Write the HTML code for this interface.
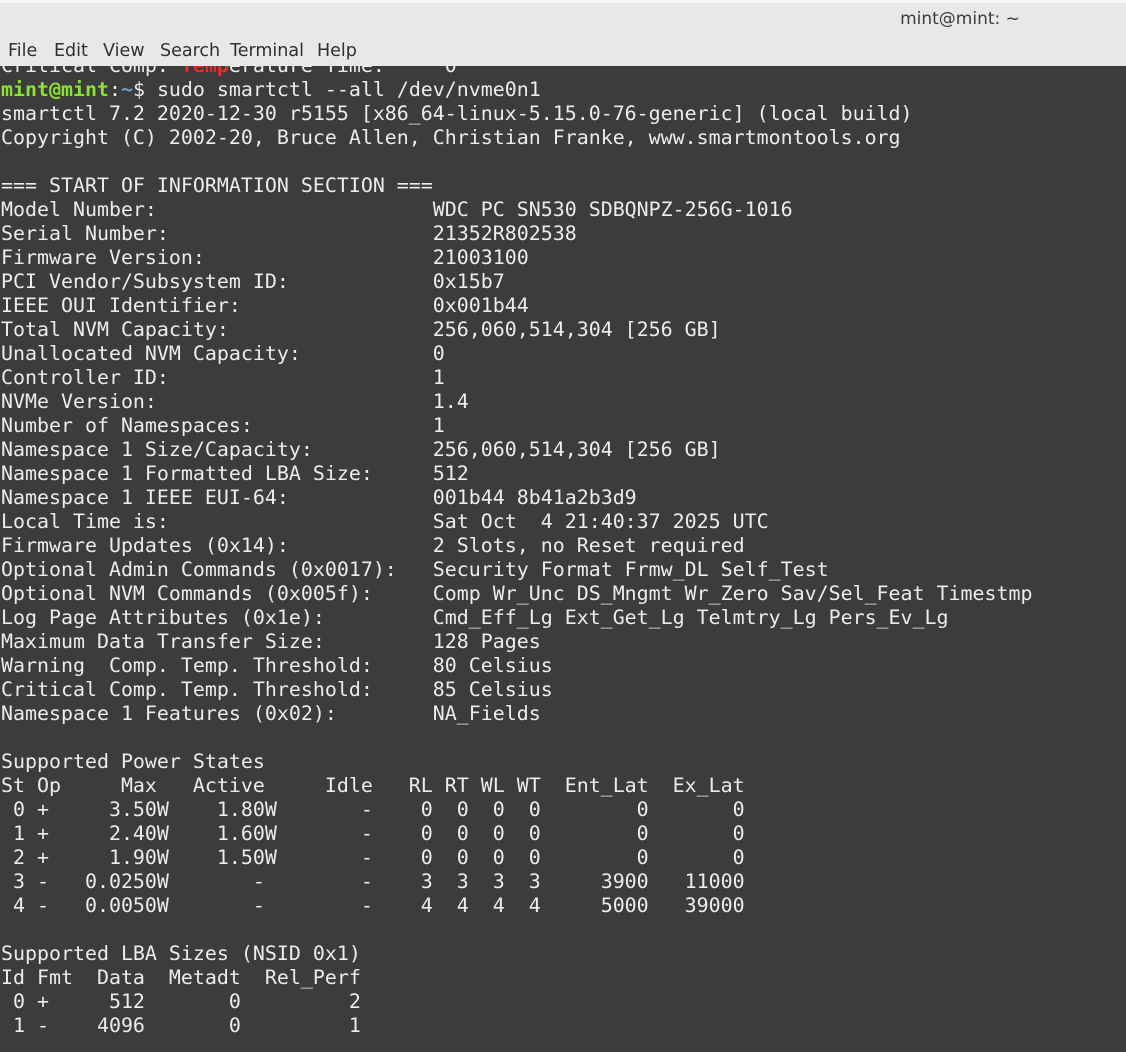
<!DOCTYPE html>
<html><head><meta charset="utf-8">
<style>
html,body{margin:0;padding:0;width:1126px;height:1052px;overflow:hidden;background:#3c3c3c;}
#top{position:absolute;left:0;top:0;width:1126px;height:66px;background:#e8e8e8;border-top:3px solid #f6f6f6;box-sizing:border-box;z-index:2;}
#title{position:absolute;left:0;width:1920px;top:6px;font:17px "DejaVu Sans","Liberation Sans",sans-serif;color:#3c3c3c;text-align:center;}
.m{position:absolute;top:38px;font:17.5px "DejaVu Sans","Liberation Sans",sans-serif;color:#303030;}
pre{position:absolute;left:1px;top:54px;margin:0;font:19.93px/24px "DejaVu Sans Mono","Liberation Mono",monospace;color:#ececec;z-index:1;}
.g{color:#8ae234;font-weight:bold}.b{color:#729fcf;font-weight:bold}.r{color:#ef2929;font-weight:bold}
</style></head><body>
<div id="top"><div id="title">mint@mint: ~</div>
<span class="m" style="left:8px">File</span><span class="m" style="left:54px">Edit</span><span class="m" style="left:103px">View</span><span class="m" style="left:160px">Search</span><span class="m" style="left:230px">Terminal</span><span class="m" style="left:317px">Help</span></div>
<pre>Critical Comp. <span class="r">Temp</span>erature Time:     0
<span class="g">mint@mint</span>:<span class="b">~</span>$ sudo smartctl --all /dev/nvme0n1
smartctl 7.2 2020-12-30 r5155 [x86_64-linux-5.15.0-76-generic] (local build)
Copyright (C) 2002-20, Bruce Allen, Christian Franke, www.smartmontools.org

=== START OF INFORMATION SECTION ===
Model Number:                       WDC PC SN530 SDBQNPZ-256G-1016
Serial Number:                      21352R802538
Firmware Version:                   21003100
PCI Vendor/Subsystem ID:            0x15b7
IEEE OUI Identifier:                0x001b44
Total NVM Capacity:                 256,060,514,304 [256 GB]
Unallocated NVM Capacity:           0
Controller ID:                      1
NVMe Version:                       1.4
Number of Namespaces:               1
Namespace 1 Size/Capacity:          256,060,514,304 [256 GB]
Namespace 1 Formatted LBA Size:     512
Namespace 1 IEEE EUI-64:            001b44 8b41a2b3d9
Local Time is:                      Sat Oct  4 21:40:37 2025 UTC
Firmware Updates (0x14):            2 Slots, no Reset required
Optional Admin Commands (0x0017):   Security Format Frmw_DL Self_Test
Optional NVM Commands (0x005f):     Comp Wr_Unc DS_Mngmt Wr_Zero Sav/Sel_Feat Timestmp
Log Page Attributes (0x1e):         Cmd_Eff_Lg Ext_Get_Lg Telmtry_Lg Pers_Ev_Lg
Maximum Data Transfer Size:         128 Pages
Warning  Comp. Temp. Threshold:     80 Celsius
Critical Comp. Temp. Threshold:     85 Celsius
Namespace 1 Features (0x02):        NA_Fields

Supported Power States
St Op     Max   Active     Idle   RL RT WL WT  Ent_Lat  Ex_Lat
 0 +     3.50W    1.80W       -    0  0  0  0        0       0
 1 +     2.40W    1.60W       -    0  0  0  0        0       0
 2 +     1.90W    1.50W       -    0  0  0  0        0       0
 3 -   0.0250W       -        -    3  3  3  3     3900   11000
 4 -   0.0050W       -        -    4  4  4  4     5000   39000

Supported LBA Sizes (NSID 0x1)
Id Fmt  Data  Metadt  Rel_Perf
 0 +     512       0         2
 1 -    4096       0         1
</pre>
</body></html>
